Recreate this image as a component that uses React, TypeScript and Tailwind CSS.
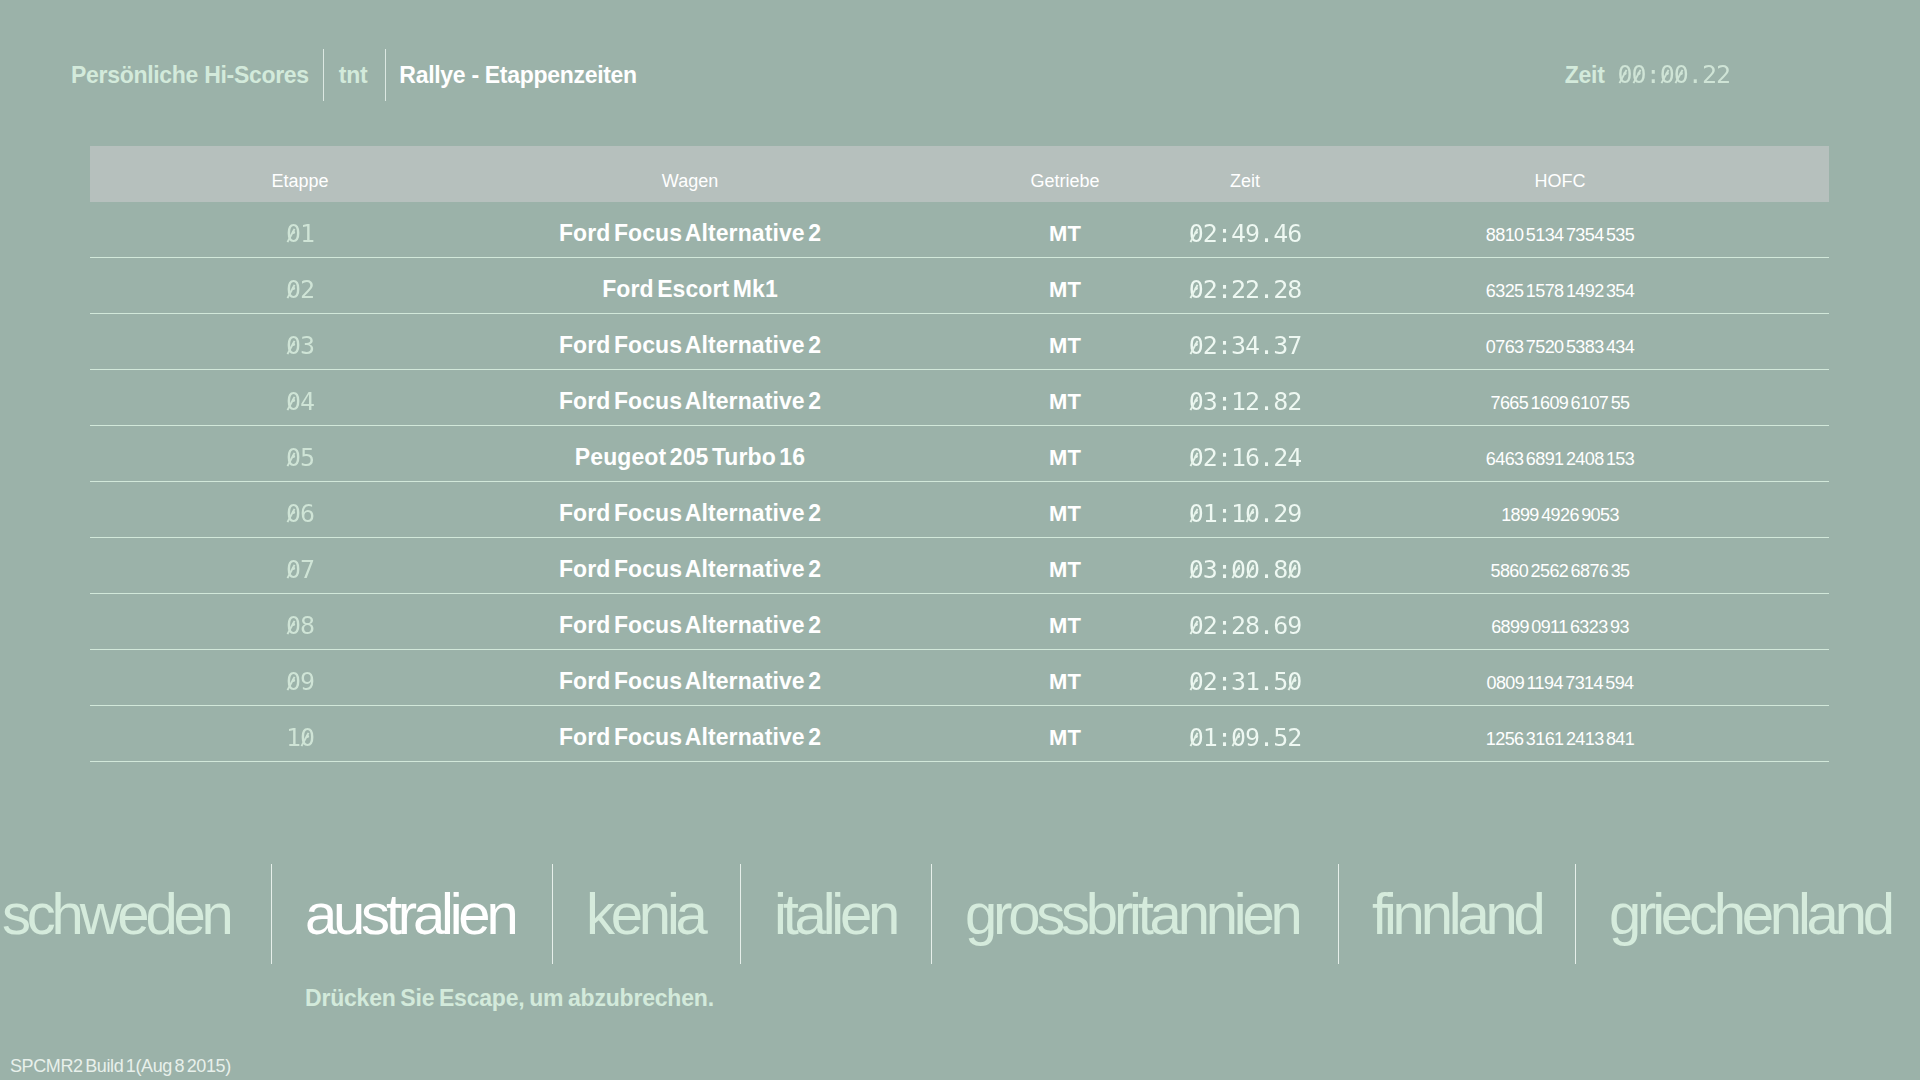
import React from "react";

const rows = [
  { n: "01", car: "Ford Focus Alternative 2", t: "02:49.46", h: "8810 5134 7354 535" },
  { n: "02", car: "Ford Escort Mk1", t: "02:22.28", h: "6325 1578 1492 354" },
  { n: "03", car: "Ford Focus Alternative 2", t: "02:34.37", h: "0763 7520 5383 434" },
  { n: "04", car: "Ford Focus Alternative 2", t: "03:12.82", h: "7665 1609 6107 55" },
  { n: "05", car: "Peugeot 205 Turbo 16", t: "02:16.24", h: "6463 6891 2408 153" },
  { n: "06", car: "Ford Focus Alternative 2", t: "01:10.29", h: "1899 4926 9053" },
  { n: "07", car: "Ford Focus Alternative 2", t: "03:00.80", h: "5860 2562 6876 35" },
  { n: "08", car: "Ford Focus Alternative 2", t: "02:28.69", h: "6899 0911 6323 93" },
  { n: "09", car: "Ford Focus Alternative 2", t: "02:31.50", h: "0809 1194 7314 594" },
  { n: "10", car: "Ford Focus Alternative 2", t: "01:09.52", h: "1256 3161 2413 841" },
];

const countries = [
  { name: "schweden", w: "w-[271px]", first: true },
  { name: "australien", w: "w-[281px]", active: true },
  { name: "kenia", w: "w-[188px]" },
  { name: "italien", w: "w-[191px]" },
  { name: "grossbritannien", w: "w-[407px]" },
  { name: "finnland", w: "w-[237px]" },
  { name: "griechenland", w: "w-[345px]" },
];

function DotText({ text, bright }: { text: string; bright?: boolean }) {
  const dot = bright
    ? "bg-[radial-gradient(circle,#eef8f2_0.8px,transparent_1.05px)] bg-[length:2px_2px] bg-clip-text text-transparent"
    : "bg-[radial-gradient(circle,#cfe4d6_0.8px,transparent_1.05px)] bg-[length:2px_2px] bg-clip-text text-transparent";
  const slash = bright ? "bg-[#e6f3ea]" : "bg-[#cfe4d6]";
  return (
    <span className="inline-flex items-center font-['DejaVu_Sans_Mono',monospace] text-[25px] tracking-[-1px] leading-[28px] whitespace-nowrap">
      {text.split("").map((ch, i) =>
        ch === "0" ? (
          <span key={i} className="relative inline-flex items-center justify-center">
            <span className={dot}>0</span>
            <span
              className={`absolute left-[4px] top-[8px] w-[2px] h-[15px] rotate-[28deg] ${slash}`}
            />
          </span>
        ) : (
          <span key={i} className={dot}>
            {ch}
          </span>
        )
      )}
    </span>
  );
}

export default function App() {
  return (
    <div className="w-[1920px] h-[1080px] overflow-hidden bg-[#9bb2a9] font-['Liberation_Sans',Arial,sans-serif] flex flex-col">
      {/* Header */}
      <div className="flex items-center justify-between pt-[49px] pl-[71px] pr-[190px]">
        <div className="flex items-center h-[52px]">
          <span className="text-[23px] font-bold tracking-[-0.3px] text-[#d3eadb]">Persönliche Hi-Scores</span>
          <div className="ml-[14px] mr-[15px] w-px h-[52px] bg-[#dce8e2]" />
          <span className="text-[23px] font-bold tracking-[-0.3px] text-[#d3eadb]">tnt</span>
          <div className="ml-[18px] mr-[13px] w-px h-[52px] bg-[#dce8e2]" />
          <span className="text-[23px] font-bold tracking-[-0.3px] text-white">Rallye - Etappenzeiten</span>
        </div>
        <div className="flex items-center gap-[13px]">
          <span className="text-[23px] font-bold tracking-[-0.3px] text-[#d3eadb]">Zeit</span>
          <DotText text="00:00.22" />
        </div>
      </div>

      {/* Table */}
      <div className="mt-[45px] ml-[90px] w-[1739px]">
        <div className="flex h-[56px] bg-[#b6c0bd] pt-[24px] text-[18px] leading-[22px] text-white">
          <div className="w-[420px] text-center">Etappe</div>
          <div className="w-[360px] text-center">Wagen</div>
          <div className="ml-[120px] w-[150px] text-center">Getriebe</div>
          <div className="w-[210px] text-center">Zeit</div>
          <div className="w-[420px] text-center">HOFC</div>
        </div>
        {rows.map((r) => (
          <div key={r.n} className="flex items-center h-[56px] pt-[8px] border-b border-[#d2e8da]">
            <div className="w-[420px] flex justify-center">
              <DotText text={r.n} />
            </div>
            <div className="w-[360px] text-center text-[23px] font-bold tracking-[0.1px] [word-spacing:-3px] text-white whitespace-nowrap">
              {r.car}
            </div>
            <div className="ml-[120px] w-[150px] text-center text-[22px] font-bold text-white">MT</div>
            <div className="w-[210px] flex justify-center">
              <DotText text={r.t} bright />
            </div>
            <div className="w-[420px] pt-[4px] text-center text-[18px] tracking-[-0.6px] [word-spacing:-2px] text-white whitespace-nowrap">
              {r.h}
            </div>
          </div>
        ))}
      </div>

      {/* Countries */}
      <div className="mt-[102px] flex h-[100px]">
        {countries.map((c) => (
          <div
            key={c.name}
            className={`${c.w} shrink-0 h-[100px] flex items-center ${c.first ? "pl-[2px]" : "pl-[33px] border-l border-[#e6efea]"}`}
          >
            <span
              className={`text-[58px] tracking-[-4.2px] leading-none whitespace-nowrap ${c.active ? "text-white" : "text-[#d5ebdc]"}`}
            >
              {c.name}
            </span>
          </div>
        ))}
      </div>

      <div className="mt-[17px] ml-[305px] text-[23px] font-bold tracking-[-0.2px] [word-spacing:-1.5px] text-[#d3eadb]">
        Drücken Sie Escape, um abzubrechen.
      </div>

      <div className="mt-[40px] ml-[10px] text-[18px] leading-[21px] tracking-[-0.4px] [word-spacing:-2px] text-[#e8f0eb] whitespace-nowrap">
        SPCMR2 Build 1(Aug 8 2015)
      </div>
    </div>
  );
}
